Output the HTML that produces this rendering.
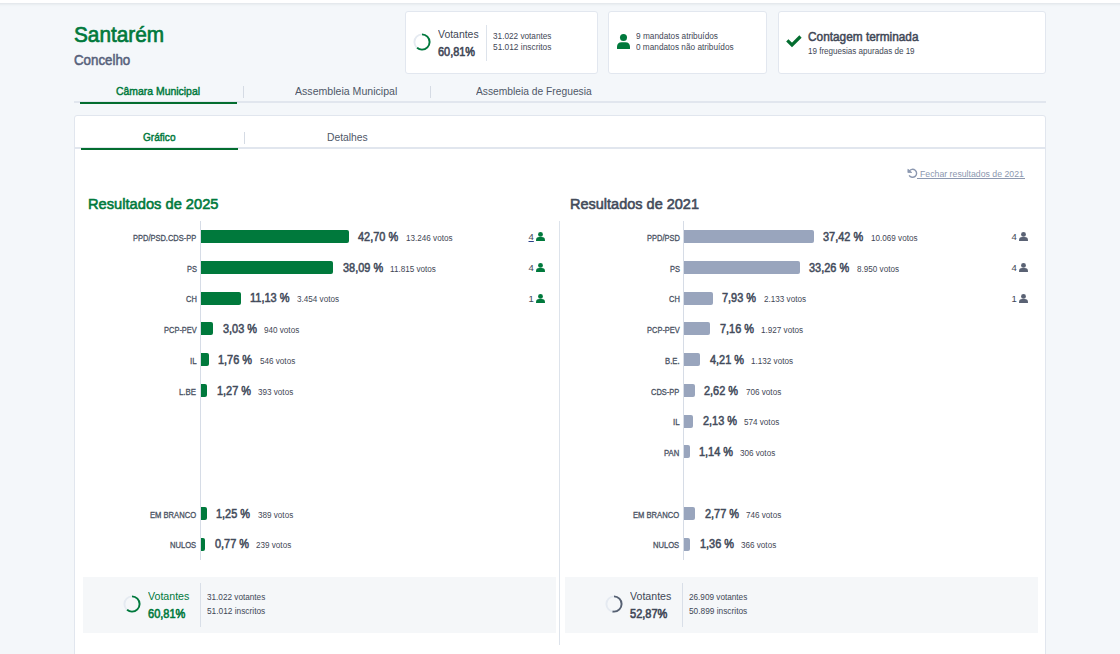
<!DOCTYPE html>
<html><head><meta charset="utf-8"><style>
html,body{margin:0;padding:0;}
body{width:1120px;height:654px;overflow:hidden;background:#f4f7fa;position:relative;font-family:"Liberation Sans",sans-serif;}
body>div,body>span,body>svg{position:absolute;display:block;}
.t{white-space:nowrap;transform-origin:0 0;}
</style></head><body>
<div style="left:-10px;top:0px;width:1140px;height:3px;background:#fff;box-shadow:0 1px 3px rgba(60,70,90,.12);z-index:2"></div>
<span class="t" style="left:74.00px;top:22px;font-size:22px;line-height:25px;color:#00793c;transform:scaleX(0.9436);-webkit-text-stroke:0.7px #00793c;">Santarém</span>
<span class="t" style="left:74.00px;top:51px;font-size:15px;line-height:17px;color:#56617a;transform:scaleX(0.8868);-webkit-text-stroke:0.55px #56617a;">Concelho</span>
<div style="left:405px;top:11px;width:193px;height:63px;box-sizing:border-box;background:#fff;border:1px solid #e2e7ef;border-radius:3px"></div>
<div style="left:608px;top:11px;width:159px;height:63px;box-sizing:border-box;background:#fff;border:1px solid #e2e7ef;border-radius:3px"></div>
<div style="left:778px;top:11px;width:268px;height:63px;box-sizing:border-box;background:#fff;border:1px solid #e2e7ef;border-radius:3px"></div>
<svg style="left:412.4px;top:32.2px;width:20px;height:20px" viewBox="0 0 20 20"><circle cx="10" cy="10" r="7.6" fill="none" stroke="#e5eaf1" stroke-width="1.9"/><circle cx="10" cy="10" r="7.6" fill="none" stroke="#00793c" stroke-width="1.9" stroke-dasharray="29.04 47.75" transform="rotate(-90 10 10)"/></svg>
<span class="t" style="left:438.40px;top:28px;font-size:11px;line-height:12px;color:#3f4756;transform:scaleX(0.9483);">Votantes</span>
<span class="t" style="left:438.40px;top:45px;font-size:12.5px;line-height:14px;color:#3f4756;transform:scaleX(0.8727);-webkit-text-stroke:0.6px #3f4756;">60,81%</span>
<div style="left:486px;top:25px;width:1px;height:36px;background:#dde3eb"></div>
<span class="t" style="left:492.60px;top:31px;font-size:8.7px;line-height:10px;color:#3f4756;transform:scaleX(0.9448);">31.022 votantes</span>
<span class="t" style="left:492.60px;top:42px;font-size:8.7px;line-height:10px;color:#3f4756;transform:scaleX(0.9601);">51.012 inscritos</span>
<svg style="left:617px;top:34px;width:13px;height:15px" viewBox="0 0 13 15"><circle cx="6.5" cy="3.5100000000000002" r="3.5100000000000002" fill="#00793c"/><path d="M0 14.4 V12.93 Q0 8.25 4.68 8.25 H8.32 Q13 8.25 13 12.93 V14.4 Q13 15 12.4 15 H0.6 Q0 15 0 14.4 Z" fill="#00793c"/></svg>
<span class="t" style="left:636.00px;top:31px;font-size:8.5px;line-height:10px;color:#3f4756;transform:scaleX(0.9749);">9 mandatos atribuídos</span>
<span class="t" style="left:636.00px;top:42px;font-size:8.5px;line-height:10px;color:#3f4756;transform:scaleX(0.9697);">0 mandatos não atribuídos</span>
<svg style="left:780px;top:30px;width:24px;height:20px" viewBox="0 0 24 20"><path d="M7.3 10.3 L12 15 L20.5 6.5" fill="none" stroke="#036d2f" stroke-width="3.2"/></svg>
<span class="t" style="left:808.00px;top:30px;font-size:12.5px;line-height:14px;color:#3f4756;transform:scaleX(0.9466);-webkit-text-stroke:0.5px #3f4756;">Contagem terminada</span>
<span class="t" style="left:808.00px;top:46px;font-size:8.5px;line-height:10px;color:#3f4756;transform:scaleX(0.9478);">19 freguesias apuradas de 19</span>
<div style="left:74px;top:101px;width:972px;height:2px;background:#e1e6ee"></div>
<div style="left:80px;top:102px;width:157px;height:2px;background:#036d2f"></div>
<span class="t" style="left:116.00px;top:85px;font-size:11px;line-height:12px;color:#00793c;transform:scaleX(0.9476);-webkit-text-stroke:0.45px #00793c;">Câmara Municipal</span>
<div style="left:243px;top:86px;width:1px;height:12px;background:#d5dbe4"></div>
<span class="t" style="left:294.50px;top:85px;font-size:11px;line-height:12px;color:#4f5868;transform:scaleX(0.9616);">Assembleia Municipal</span>
<div style="left:430px;top:86px;width:1px;height:12px;background:#d5dbe4"></div>
<span class="t" style="left:475.90px;top:85px;font-size:11px;line-height:12px;color:#4f5868;transform:scaleX(0.9322);">Assembleia de Freguesia</span>
<div style="left:74px;top:115px;width:972px;height:560px;box-sizing:border-box;background:#fff;border:1px solid #e1e6ee;border-radius:3px"></div>
<div style="left:75px;top:147px;width:970px;height:2px;background:#e1e6ee"></div>
<div style="left:81px;top:148px;width:157px;height:2px;background:#036d2f"></div>
<span class="t" style="left:143.00px;top:131px;font-size:11px;line-height:12px;color:#00793c;transform:scaleX(0.9167);-webkit-text-stroke:0.45px #00793c;">Gráfico</span>
<div style="left:244px;top:132px;width:1px;height:12px;background:#d5dbe4"></div>
<span class="t" style="left:327.00px;top:131px;font-size:11px;line-height:12px;color:#4f5868;transform:scaleX(0.9375);">Detalhes</span>
<svg style="left:904px;top:166px;width:18px;height:16px" viewBox="0 0 18 16"><path d="M5.14 5.3 A4 4 0 1 1 5.14 9.3" fill="none" stroke="#8c98b0" stroke-width="1.4"/><path d="M3.9 3.2 L3.9 6.5 L7.8 6.5 Z" fill="#8c98b0" stroke="#8c98b0" stroke-width="0.8" stroke-linejoin="round"/></svg>
<span class="t" style="left:920.00px;top:168px;font-size:9.6px;line-height:11px;color:#8c98b0;transform:scaleX(0.9106);">Fechar resultados de 2021</span>
<div style="left:917px;top:178px;width:108px;height:1px;background:#8c98b0"></div>
<span class="t" style="left:88.00px;top:195px;font-size:15.5px;line-height:17px;color:#00793c;transform:scaleX(0.9465);-webkit-text-stroke:0.6px #00793c;">Resultados de 2025</span>
<span class="t" style="left:569.70px;top:195px;font-size:15.5px;line-height:17px;color:#434b5a;transform:scaleX(0.9356);-webkit-text-stroke:0.6px #434b5a;">Resultados de 2021</span>
<div style="left:559px;top:221px;width:1px;height:424px;background:#dde3eb"></div>
<div style="left:200px;top:221px;width:1px;height:339px;background:#d6dce6"></div>
<div style="left:201px;top:230px;width:148.0px;height:13px;background:#00793c;border-radius:0 2px 2px 0"></div>
<span class="t" style="left:133.32px;top:233px;font-size:8.5px;line-height:10px;color:#4a5263;transform:scaleX(0.8800);-webkit-text-stroke:0.3px #4a5263;">PPD/PSD.CDS-PP</span>
<span class="t" style="left:358.49px;top:230px;font-size:12.5px;line-height:14px;color:#434b5b;transform:scaleX(0.8750);-webkit-text-stroke:0.55px #434b5b;">42,70 %</span>
<span class="t" style="left:405.92px;top:233px;font-size:8.5px;line-height:10px;color:#3f4756;transform:scaleX(0.9550);">13.246 votos</span>
<div style="left:201px;top:261px;width:132.2px;height:13px;background:#00793c;border-radius:0 2px 2px 0"></div>
<span class="t" style="left:186.52px;top:264px;font-size:8.5px;line-height:10px;color:#4a5263;transform:scaleX(0.8800);-webkit-text-stroke:0.3px #4a5263;">PS</span>
<span class="t" style="left:342.70px;top:261px;font-size:12.5px;line-height:14px;color:#434b5b;transform:scaleX(0.8750);-webkit-text-stroke:0.55px #434b5b;">38,09 %</span>
<span class="t" style="left:390.13px;top:264px;font-size:8.5px;line-height:10px;color:#3f4756;transform:scaleX(0.9550);">11.815 votos</span>
<div style="left:201px;top:292px;width:39.8px;height:13px;background:#00793c;border-radius:0 2px 2px 0"></div>
<span class="t" style="left:185.70px;top:294px;font-size:8.5px;line-height:10px;color:#4a5263;transform:scaleX(0.8800);-webkit-text-stroke:0.3px #4a5263;">CH</span>
<span class="t" style="left:250.33px;top:291px;font-size:12.5px;line-height:14px;color:#434b5b;transform:scaleX(0.8796);-webkit-text-stroke:0.55px #434b5b;">11,13 %</span>
<span class="t" style="left:297.16px;top:294px;font-size:8.5px;line-height:10px;color:#3f4756;transform:scaleX(0.9550);">3.454 votos</span>
<div style="left:201px;top:322px;width:12.1px;height:13px;background:#00793c;border-radius:0 2px 2px 0"></div>
<span class="t" style="left:163.66px;top:325px;font-size:8.5px;line-height:10px;color:#4a5263;transform:scaleX(0.8800);-webkit-text-stroke:0.3px #4a5263;">PCP-PEV</span>
<span class="t" style="left:222.58px;top:322px;font-size:12.5px;line-height:14px;color:#434b5b;transform:scaleX(0.8750);-webkit-text-stroke:0.55px #434b5b;">3,03 %</span>
<span class="t" style="left:263.93px;top:325px;font-size:8.5px;line-height:10px;color:#3f4756;transform:scaleX(0.9550);">940 votos</span>
<div style="left:201px;top:353px;width:7.7px;height:13px;background:#00793c;border-radius:0 2px 2px 0"></div>
<span class="t" style="left:189.85px;top:356px;font-size:8.5px;line-height:10px;color:#4a5263;transform:scaleX(0.9377);-webkit-text-stroke:0.3px #4a5263;">IL</span>
<span class="t" style="left:218.23px;top:353px;font-size:12.5px;line-height:14px;color:#434b5b;transform:scaleX(0.8750);-webkit-text-stroke:0.55px #434b5b;">1,76 %</span>
<span class="t" style="left:259.58px;top:356px;font-size:8.5px;line-height:10px;color:#3f4756;transform:scaleX(0.9550);">546 votos</span>
<div style="left:201px;top:384px;width:6.1px;height:13px;background:#00793c;border-radius:0 2px 2px 0"></div>
<span class="t" style="left:179.46px;top:387px;font-size:8.5px;line-height:10px;color:#4a5263;transform:scaleX(0.9246);-webkit-text-stroke:0.3px #4a5263;">L.BE</span>
<span class="t" style="left:216.55px;top:384px;font-size:12.5px;line-height:14px;color:#434b5b;transform:scaleX(0.8750);-webkit-text-stroke:0.55px #434b5b;">1,27 %</span>
<span class="t" style="left:257.90px;top:387px;font-size:8.5px;line-height:10px;color:#3f4756;transform:scaleX(0.9550);">393 votos</span>
<div style="left:201px;top:507px;width:6.0px;height:13px;background:#00793c;border-radius:0 2px 2px 0"></div>
<span class="t" style="left:150.37px;top:510px;font-size:8.5px;line-height:10px;color:#4a5263;transform:scaleX(0.8960);-webkit-text-stroke:0.3px #4a5263;">EM BRANCO</span>
<span class="t" style="left:216.48px;top:507px;font-size:12.5px;line-height:14px;color:#434b5b;transform:scaleX(0.8750);-webkit-text-stroke:0.55px #434b5b;">1,25 %</span>
<span class="t" style="left:257.83px;top:510px;font-size:8.5px;line-height:10px;color:#3f4756;transform:scaleX(0.9550);">389 votos</span>
<div style="left:201px;top:538px;width:4.3px;height:13px;background:#00793c;border-radius:0 2px 2px 0"></div>
<span class="t" style="left:170.32px;top:540px;font-size:8.5px;line-height:10px;color:#4a5263;transform:scaleX(0.8940);-webkit-text-stroke:0.3px #4a5263;">NULOS</span>
<span class="t" style="left:214.84px;top:537px;font-size:12.5px;line-height:14px;color:#434b5b;transform:scaleX(0.8750);-webkit-text-stroke:0.55px #434b5b;">0,77 %</span>
<span class="t" style="left:256.19px;top:540px;font-size:8.5px;line-height:10px;color:#3f4756;transform:scaleX(0.9550);">239 votos</span>
<span class="t" style="left:528.52px;top:231px;font-size:9.5px;line-height:11px;color:#3f4756;text-decoration:underline;text-decoration-color:#2a3f8a;">4</span>
<svg style="left:536px;top:232px;width:9px;height:9px" viewBox="0 0 9 9"><circle cx="4.5" cy="2.43" r="2.43" fill="#00793c"/><path d="M0 8.4 V8.19 Q0 4.95 3.2399999999999998 4.95 H5.76 Q9 4.95 9 8.19 V8.4 Q9 9 8.4 9 H0.6 Q0 9 0 8.4 Z" fill="#00793c"/></svg>
<span class="t" style="left:528.52px;top:262px;font-size:9.5px;line-height:11px;color:#3f4756;">4</span>
<svg style="left:536px;top:263px;width:9px;height:9px" viewBox="0 0 9 9"><circle cx="4.5" cy="2.43" r="2.43" fill="#00793c"/><path d="M0 8.4 V8.19 Q0 4.95 3.2399999999999998 4.95 H5.76 Q9 4.95 9 8.19 V8.4 Q9 9 8.4 9 H0.6 Q0 9 0 8.4 Z" fill="#00793c"/></svg>
<span class="t" style="left:528.52px;top:293px;font-size:9.5px;line-height:11px;color:#3f4756;">1</span>
<svg style="left:536px;top:294px;width:9px;height:9px" viewBox="0 0 9 9"><circle cx="4.5" cy="2.43" r="2.43" fill="#00793c"/><path d="M0 8.4 V8.19 Q0 4.95 3.2399999999999998 4.95 H5.76 Q9 4.95 9 8.19 V8.4 Q9 9 8.4 9 H0.6 Q0 9 0 8.4 Z" fill="#00793c"/></svg>
<div style="left:683px;top:221px;width:1px;height:339px;background:#d6dce6"></div>
<div style="left:684px;top:230px;width:129.9px;height:13px;background:#99a5bd;border-radius:0 2px 2px 0"></div>
<span class="t" style="left:646.66px;top:233px;font-size:8.5px;line-height:10px;color:#4a5263;transform:scaleX(0.8800);-webkit-text-stroke:0.3px #4a5263;">PPD/PSD</span>
<span class="t" style="left:823.40px;top:230px;font-size:12.5px;line-height:14px;color:#434b5b;transform:scaleX(0.8750);-webkit-text-stroke:0.55px #434b5b;">37,42 %</span>
<span class="t" style="left:870.84px;top:233px;font-size:8.5px;line-height:10px;color:#3f4756;transform:scaleX(0.9550);">10.069 votos</span>
<div style="left:684px;top:261px;width:115.6px;height:13px;background:#99a5bd;border-radius:0 2px 2px 0"></div>
<span class="t" style="left:669.52px;top:264px;font-size:8.5px;line-height:10px;color:#4a5263;transform:scaleX(0.8800);-webkit-text-stroke:0.3px #4a5263;">PS</span>
<span class="t" style="left:809.15px;top:261px;font-size:12.5px;line-height:14px;color:#434b5b;transform:scaleX(0.8750);-webkit-text-stroke:0.55px #434b5b;">33,26 %</span>
<span class="t" style="left:856.58px;top:264px;font-size:8.5px;line-height:10px;color:#3f4756;transform:scaleX(0.9550);">8.950 votos</span>
<div style="left:684px;top:292px;width:28.9px;height:13px;background:#99a5bd;border-radius:0 2px 2px 0"></div>
<span class="t" style="left:668.70px;top:294px;font-size:8.5px;line-height:10px;color:#4a5263;transform:scaleX(0.8800);-webkit-text-stroke:0.3px #4a5263;">CH</span>
<span class="t" style="left:722.37px;top:291px;font-size:12.5px;line-height:14px;color:#434b5b;transform:scaleX(0.8750);-webkit-text-stroke:0.55px #434b5b;">7,93 %</span>
<span class="t" style="left:763.72px;top:294px;font-size:8.5px;line-height:10px;color:#3f4756;transform:scaleX(0.9550);">2.133 votos</span>
<div style="left:684px;top:322px;width:26.2px;height:13px;background:#99a5bd;border-radius:0 2px 2px 0"></div>
<span class="t" style="left:646.66px;top:325px;font-size:8.5px;line-height:10px;color:#4a5263;transform:scaleX(0.8800);-webkit-text-stroke:0.3px #4a5263;">PCP-PEV</span>
<span class="t" style="left:719.73px;top:322px;font-size:12.5px;line-height:14px;color:#434b5b;transform:scaleX(0.8750);-webkit-text-stroke:0.55px #434b5b;">7,16 %</span>
<span class="t" style="left:761.08px;top:325px;font-size:8.5px;line-height:10px;color:#3f4756;transform:scaleX(0.9550);">1.927 votos</span>
<div style="left:684px;top:353px;width:16.1px;height:13px;background:#99a5bd;border-radius:0 2px 2px 0"></div>
<span class="t" style="left:664.95px;top:356px;font-size:8.5px;line-height:10px;color:#4a5263;transform:scaleX(0.9057);-webkit-text-stroke:0.3px #4a5263;">B.E.</span>
<span class="t" style="left:709.62px;top:353px;font-size:12.5px;line-height:14px;color:#434b5b;transform:scaleX(0.8750);-webkit-text-stroke:0.55px #434b5b;">4,21 %</span>
<span class="t" style="left:750.97px;top:356px;font-size:8.5px;line-height:10px;color:#3f4756;transform:scaleX(0.9550);">1.132 votos</span>
<div style="left:684px;top:384px;width:10.7px;height:13px;background:#99a5bd;border-radius:0 2px 2px 0"></div>
<span class="t" style="left:651.24px;top:387px;font-size:8.5px;line-height:10px;color:#4a5263;transform:scaleX(0.8800);-webkit-text-stroke:0.3px #4a5263;">CDS-PP</span>
<span class="t" style="left:704.18px;top:384px;font-size:12.5px;line-height:14px;color:#434b5b;transform:scaleX(0.8750);-webkit-text-stroke:0.55px #434b5b;">2,62 %</span>
<span class="t" style="left:745.53px;top:387px;font-size:8.5px;line-height:10px;color:#3f4756;transform:scaleX(0.9550);">706 votos</span>
<div style="left:684px;top:415px;width:9.0px;height:13px;background:#99a5bd;border-radius:0 2px 2px 0"></div>
<span class="t" style="left:672.85px;top:417px;font-size:8.5px;line-height:10px;color:#4a5263;transform:scaleX(0.9377);-webkit-text-stroke:0.3px #4a5263;">IL</span>
<span class="t" style="left:702.50px;top:414px;font-size:12.5px;line-height:14px;color:#434b5b;transform:scaleX(0.8750);-webkit-text-stroke:0.55px #434b5b;">2,13 %</span>
<span class="t" style="left:743.85px;top:417px;font-size:8.5px;line-height:10px;color:#3f4756;transform:scaleX(0.9550);">574 votos</span>
<div style="left:684px;top:445px;width:5.6px;height:13px;background:#99a5bd;border-radius:0 2px 2px 0"></div>
<span class="t" style="left:664.26px;top:448px;font-size:8.5px;line-height:10px;color:#4a5263;transform:scaleX(0.9045);-webkit-text-stroke:0.3px #4a5263;">PAN</span>
<span class="t" style="left:699.11px;top:445px;font-size:12.5px;line-height:14px;color:#434b5b;transform:scaleX(0.8750);-webkit-text-stroke:0.55px #434b5b;">1,14 %</span>
<span class="t" style="left:740.46px;top:448px;font-size:8.5px;line-height:10px;color:#3f4756;transform:scaleX(0.9550);">306 votos</span>
<div style="left:684px;top:507px;width:11.2px;height:13px;background:#99a5bd;border-radius:0 2px 2px 0"></div>
<span class="t" style="left:633.37px;top:510px;font-size:8.5px;line-height:10px;color:#4a5263;transform:scaleX(0.8960);-webkit-text-stroke:0.3px #4a5263;">EM BRANCO</span>
<span class="t" style="left:704.69px;top:507px;font-size:12.5px;line-height:14px;color:#434b5b;transform:scaleX(0.8750);-webkit-text-stroke:0.55px #434b5b;">2,77 %</span>
<span class="t" style="left:746.04px;top:510px;font-size:8.5px;line-height:10px;color:#3f4756;transform:scaleX(0.9550);">746 votos</span>
<div style="left:684px;top:538px;width:6.4px;height:13px;background:#99a5bd;border-radius:0 2px 2px 0"></div>
<span class="t" style="left:653.32px;top:540px;font-size:8.5px;line-height:10px;color:#4a5263;transform:scaleX(0.8940);-webkit-text-stroke:0.3px #4a5263;">NULOS</span>
<span class="t" style="left:699.86px;top:537px;font-size:12.5px;line-height:14px;color:#434b5b;transform:scaleX(0.8750);-webkit-text-stroke:0.55px #434b5b;">1,36 %</span>
<span class="t" style="left:741.21px;top:540px;font-size:8.5px;line-height:10px;color:#3f4756;transform:scaleX(0.9550);">366 votos</span>
<span class="t" style="left:1011.52px;top:231px;font-size:9.5px;line-height:11px;color:#3f4756;">4</span>
<svg style="left:1019px;top:232px;width:9px;height:9px" viewBox="0 0 9 9"><circle cx="4.5" cy="2.43" r="2.43" fill="#5a6274"/><path d="M0 8.4 V8.19 Q0 4.95 3.2399999999999998 4.95 H5.76 Q9 4.95 9 8.19 V8.4 Q9 9 8.4 9 H0.6 Q0 9 0 8.4 Z" fill="#5a6274"/></svg>
<span class="t" style="left:1011.52px;top:262px;font-size:9.5px;line-height:11px;color:#3f4756;">4</span>
<svg style="left:1019px;top:263px;width:9px;height:9px" viewBox="0 0 9 9"><circle cx="4.5" cy="2.43" r="2.43" fill="#5a6274"/><path d="M0 8.4 V8.19 Q0 4.95 3.2399999999999998 4.95 H5.76 Q9 4.95 9 8.19 V8.4 Q9 9 8.4 9 H0.6 Q0 9 0 8.4 Z" fill="#5a6274"/></svg>
<span class="t" style="left:1011.52px;top:293px;font-size:9.5px;line-height:11px;color:#3f4756;">1</span>
<svg style="left:1019px;top:294px;width:9px;height:9px" viewBox="0 0 9 9"><circle cx="4.5" cy="2.43" r="2.43" fill="#5a6274"/><path d="M0 8.4 V8.19 Q0 4.95 3.2399999999999998 4.95 H5.76 Q9 4.95 9 8.19 V8.4 Q9 9 8.4 9 H0.6 Q0 9 0 8.4 Z" fill="#5a6274"/></svg>
<div style="left:83px;top:577px;width:473px;height:56px;background:#f5f7f9"></div>
<svg style="left:122.30000000000001px;top:594.3px;width:20px;height:20px" viewBox="0 0 20 20"><circle cx="10" cy="10" r="7.6" fill="none" stroke="#e5eaf1" stroke-width="1.9"/><circle cx="10" cy="10" r="7.6" fill="none" stroke="#00793c" stroke-width="1.9" stroke-dasharray="29.04 47.75" transform="rotate(-90 10 10)"/></svg>
<span class="t" style="left:148.30px;top:590px;font-size:11px;line-height:12px;color:#00793c;transform:scaleX(0.9647);">Votantes</span>
<span class="t" style="left:148.30px;top:607px;font-size:12.5px;line-height:14px;color:#00793c;transform:scaleX(0.8822);-webkit-text-stroke:0.6px #00793c;">60,81%</span>
<div style="left:200px;top:583px;width:1px;height:44px;background:#d9dfe8"></div>
<span class="t" style="left:206.70px;top:592px;font-size:8.7px;line-height:10px;color:#3f4756;transform:scaleX(0.9416);">31.022 votantes</span>
<span class="t" style="left:206.70px;top:606px;font-size:8.7px;line-height:10px;color:#3f4756;transform:scaleX(0.9568);">51.012 inscritos</span>
<div style="left:565px;top:577px;width:473px;height:56px;background:#f5f7f9"></div>
<svg style="left:604.3px;top:594.3px;width:20px;height:20px" viewBox="0 0 20 20"><circle cx="10" cy="10" r="7.6" fill="none" stroke="#e5eaf1" stroke-width="1.9"/><circle cx="10" cy="10" r="7.6" fill="none" stroke="#566072" stroke-width="1.9" stroke-dasharray="25.25 47.75" transform="rotate(-90 10 10)"/></svg>
<span class="t" style="left:630.30px;top:590px;font-size:11px;line-height:12px;color:#3f4756;transform:scaleX(0.9647);">Votantes</span>
<span class="t" style="left:630.30px;top:607px;font-size:12.5px;line-height:14px;color:#3f4756;transform:scaleX(0.8822);-webkit-text-stroke:0.6px #3f4756;">52,87%</span>
<div style="left:682px;top:583px;width:1px;height:44px;background:#d9dfe8"></div>
<span class="t" style="left:688.70px;top:592px;font-size:8.7px;line-height:10px;color:#3f4756;transform:scaleX(0.9416);">26.909 votantes</span>
<span class="t" style="left:688.70px;top:606px;font-size:8.7px;line-height:10px;color:#3f4756;transform:scaleX(0.9568);">50.899 inscritos</span>
</body></html>
